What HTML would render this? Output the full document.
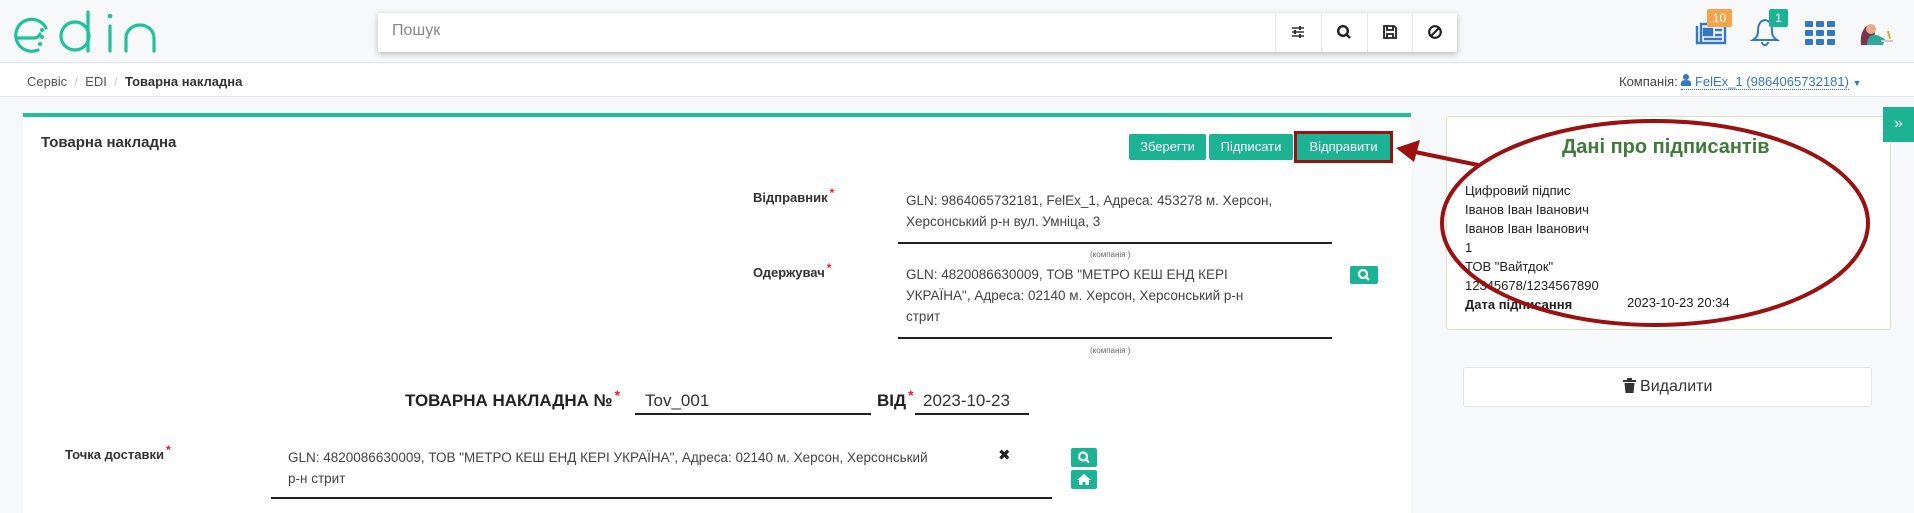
<!DOCTYPE html>
<html><head><meta charset="utf-8"><style>
*{margin:0;padding:0;box-sizing:border-box}
body{width:1914px;height:503px;overflow:hidden;background:#f7f8fa;font-family:"Liberation Sans","DejaVu Sans",sans-serif;color:#333;position:relative;font-size:14px}
.a{position:absolute;white-space:nowrap}
.btn{position:absolute;background:#1bb394;color:#fff;font-size:13px;text-align:center;border-radius:2px}
.st{color:#e0202a;font-size:12px;vertical-align:top;position:relative;top:-4px;margin-left:2px}
.ul{position:absolute;height:1.5px;background:#222}
.sm{position:absolute;font-size:8px;color:#666}
.ib{position:absolute;background:#1bb394;border-radius:2px}
</style></head><body>
<!-- header -->
<div class="a" style="left:0;top:0;width:1914px;height:63px;background:#f7f8fa;border-bottom:1px solid #e3e6ea"></div>
<svg class="a" style="left:0;top:0" width="170" height="60" viewBox="0 0 170 60">
<g fill="none" stroke="#1fc29a" stroke-width="3.2" stroke-linecap="round">
<path d="M38 50 A16 16 0 1 1 46 28"/><path d="M18 38 H34 Q38 38 40 34"/>
<path d="M88 12 V51"/><circle cx="75" cy="36" r="14"/>
<path d="M110 26 V51"/>
<path d="M126 51 V38 A14 13 0 0 1 154 38 V51"/></g>
<g fill="#1fc29a"><circle cx="42" cy="30" r="2"/><circle cx="42" cy="37" r="2"/><circle cx="40" cy="44" r="2"/><circle cx="110" cy="16" r="2.3"/></g>
</svg>
<div class="a" style="left:378px;top:13px;width:1079px;height:39px;background:#fff;box-shadow:0 2px 6px rgba(0,0,0,.25)"></div>
<div class="a" style="left:392px;top:22px;font-size:16px;color:#888">Пошук</div>
<div class="a" style="left:1275px;top:13px;width:1px;height:39px;background:#e5e5e5"></div>
<div class="a" style="left:1321px;top:13px;width:1px;height:39px;background:#e5e5e5"></div>
<div class="a" style="left:1367px;top:13px;width:1px;height:39px;background:#e5e5e5"></div>
<div class="a" style="left:1412px;top:13px;width:1px;height:39px;background:#e5e5e5"></div>
<svg class="a" style="left:1290px;top:24px" width="16" height="16" viewBox="0 0 16 16" stroke="#333" stroke-width="1.5"><path d="M2 4H14M2 8H14M2 12H14"/><path d="M10 2V6M5 6V10M10 10V14" stroke-width="2.2"/></svg>
<svg class="a" style="left:1336px;top:24px" width="16" height="16" viewBox="0 0 16 16" fill="none" stroke="#222" stroke-width="2.4"><circle cx="7" cy="7" r="4.8"/><path d="M10.5 10.5L14 14"/></svg>
<svg class="a" style="left:1382px;top:24px" width="16" height="16" viewBox="0 0 16 16" fill="none" stroke="#222" stroke-width="1.8"><path d="M2 2H12L14 4V14H2Z"/><path d="M5 2V6H11V2M5 14V10H11V14"/></svg>
<svg class="a" style="left:1427px;top:24px" width="16" height="16" viewBox="0 0 16 16" fill="none" stroke="#222" stroke-width="2.2"><circle cx="8" cy="8" r="5.8"/><path d="M4 12L12 4"/></svg>
<!-- top right icons -->
<svg class="a" style="left:1693px;top:20px" width="34" height="25" viewBox="0 0 34 25" fill="none" stroke="#3478c4" stroke-width="2.4"><path d="M4 6V23H32V4H8V23"/><rect x="11" y="9" width="8" height="6" fill="#3478c4"/><path d="M22 10H29M22 15H29M11 19H29"/></svg>
<div class="a" style="left:1707px;top:9px;width:25px;height:18px;background:#f4a54a;color:#fff;font-size:12px;text-align:center;line-height:18px;border-radius:2px">10</div>
<svg class="a" style="left:1750px;top:17px" width="30" height="30" viewBox="0 0 30 30" fill="none" stroke="#3478c4" stroke-width="2"><path d="M15 3C9 4 8 9 8 14C8 19 6 21 3 23H27C24 21 22 19 22 14C22 9 21 4 15 3Z"/><path d="M12 25A3 3 0 0 0 18 25"/></svg>
<div class="a" style="left:1769px;top:9px;width:19px;height:18px;background:#1bb394;color:#fff;font-size:12px;text-align:center;line-height:18px;border-radius:2px">1</div>
<svg class="a" style="left:1805px;top:21px" width="30" height="24" viewBox="0 0 30 24" fill="#3478c4"><rect x="0" y="0" width="8" height="6" rx="1"/><rect x="11" y="0" width="8" height="6" rx="1"/><rect x="22" y="0" width="8" height="6" rx="1"/><rect x="0" y="9" width="8" height="6" rx="1"/><rect x="11" y="9" width="8" height="6" rx="1"/><rect x="22" y="9" width="8" height="6" rx="1"/><rect x="0" y="18" width="8" height="6" rx="1"/><rect x="11" y="18" width="8" height="6" rx="1"/><rect x="22" y="18" width="8" height="6" rx="1"/></svg>
<svg class="a" style="left:1857px;top:17px" width="38" height="30" viewBox="0 0 38 30"><path d="M4 28C3 18 6 10 12 8C17 6 20 10 18 15L16 28Z" fill="#7a3350"/><circle cx="14" cy="12" r="5" fill="#e9a98f"/><path d="M10 28C10 20 14 17 20 18L28 22L26 28Z" fill="#2fa89a"/><path d="M24 24H36" stroke="#ccc" stroke-width="2"/><path d="M31 14L33 22" stroke="#d9a441" stroke-width="2"/></svg>
<!-- breadcrumb -->
<div class="a" style="left:0;top:64px;width:1914px;height:33px;background:#fff;border-bottom:1px solid #e3e6ea"></div>
<div class="a" style="left:27px;top:74px;font-size:13px;color:#555">Сервіс <span style="color:#ccc">&nbsp;/&nbsp;</span> EDI <span style="color:#ccc">&nbsp;/&nbsp;</span> <b style="color:#333">Товарна накладна</b></div>
<div class="a" style="left:1619px;top:74px;font-size:13px;color:#444">Компанія: <span style="color:#3478c4;border-bottom:1px dotted #3478c4"><svg width="10" height="12" viewBox="0 0 10 12" fill="#3478c4"><circle cx="5" cy="3" r="3"/><path d="M0 12V9Q0 6 5 6Q10 6 10 9V12Z"/></svg> FelEx_1 (9864065732181)</span> <span style="color:#3478c4;font-size:9px">▼</span></div>
<!-- main panel -->
<div class="a" style="left:23px;top:113px;width:1388px;height:400px;background:#fff;border-top:4px solid #1fbf9b"></div>
<div class="a" style="left:41px;top:134px;font-size:15px;font-weight:bold;color:#333">Товарна накладна</div>
<div class="btn" style="left:1129px;top:134px;width:77px;height:26px;line-height:26px">Зберегти</div>
<div class="btn" style="left:1209px;top:134px;width:84px;height:26px;line-height:26px">Підписати</div>
<div class="btn" style="left:1294px;top:131px;width:99px;height:32px;line-height:26px;border:3px solid #9b1010;border-radius:0">Відправити</div>
<div class="a" style="left:753px;top:190px;font-size:13px;font-weight:bold">Відправник<span class="st">*</span></div>
<div class="a" style="left:906px;top:190px;font-size:13.5px;line-height:21px;color:#444">GLN: 9864065732181, FelEx_1, Адреса: 453278 м. Херсон,<br>Херсонський р-н вул. Умніца, 3</div>
<div class="ul" style="left:898px;top:242px;width:434px"></div>
<div class="sm" style="left:1090px;top:250px">(компанія )</div>
<div class="a" style="left:753px;top:265px;font-size:13px;font-weight:bold">Одержувач<span class="st">*</span></div>
<div class="a" style="left:906px;top:264px;font-size:13.5px;line-height:21px;color:#444">GLN: 4820086630009, ТОВ "МЕТРО КЕШ ЕНД КЕРІ<br>УКРАЇНА", Адреса: 02140 м. Херсон, Херсонський р-н<br>стрит</div>
<div class="ul" style="left:898px;top:337px;width:434px"></div>
<div class="sm" style="left:1090px;top:346px">(компанія )</div>
<div class="ib" style="left:1350px;top:266px;width:28px;height:18px"><svg width="28" height="18" viewBox="0 0 28 18" fill="none" stroke="#fff" stroke-width="2.2"><circle cx="13" cy="8" r="4"/><path d="M16 11L19 14"/></svg></div>
<div class="a" style="left:405px;top:391px;font-size:17px;font-weight:bold;color:#222">ТОВАРНА НАКЛАДНА №<span class="st" style="font-size:14px">*</span></div>
<div class="a" style="left:645px;top:391px;font-size:17px;color:#333">Tov_001</div>
<div class="ul" style="left:635px;top:413px;width:236px"></div>
<div class="a" style="left:877px;top:391px;font-size:17px;font-weight:bold;color:#222">ВІД<span class="st" style="font-size:14px">*</span></div>
<div class="a" style="left:923px;top:391px;font-size:17px;color:#333">2023-10-23</div>
<div class="ul" style="left:915px;top:413px;width:114px"></div>
<div class="a" style="left:65px;top:447px;font-size:13px;font-weight:bold">Точка доставки<span class="st">*</span></div>
<div class="a" style="left:288px;top:447px;font-size:13.5px;line-height:21px;color:#444">GLN: 4820086630009, ТОВ "МЕТРО КЕШ ЕНД КЕРІ УКРАЇНА", Адреса: 02140 м. Херсон, Херсонський<br>р-н стрит</div>
<div class="a" style="left:998px;top:446px;font-size:15px;font-weight:bold;color:#222">✖</div>
<div class="ul" style="left:271px;top:497px;width:781px"></div>
<div class="ib" style="left:1071px;top:448px;width:26px;height:19px"><svg width="26" height="19" viewBox="0 0 26 19" fill="none" stroke="#fff" stroke-width="2.2"><circle cx="12" cy="8.5" r="4"/><path d="M15 11.5L18 14.5"/></svg></div>
<div class="ib" style="left:1071px;top:470px;width:26px;height:19px"><svg width="26" height="19" viewBox="0 0 26 19" fill="#fff"><path d="M13 4L6 10H8V15H11.5V12H14.5V15H18V10H20Z"/></svg></div>
<!-- right panel -->
<div class="a" style="left:1446px;top:116px;width:445px;height:214px;background:#fff;border:1px solid #cfe8c4;border-radius:3px"></div>
<div class="a" style="left:1883px;top:107px;width:31px;height:35px;background:#1bb394;color:#fff;font-size:16px;text-align:center;line-height:33px">»</div>
<div class="a" style="left:1562px;top:136px;font-size:20px;font-weight:bold;color:#3f7a3b">Дані про підписантів</div>
<div class="a" style="left:1465px;top:181px;font-size:13px;line-height:19px;color:#222">Цифровий підпис<br>Іванов Іван Іванович<br>Іванов Іван Іванович<br>1<br>ТОВ "Вайтдок"<br>12345678/1234567890<br><b>Дата підписання</b></div>
<div class="a" style="left:1627px;top:295px;font-size:13px;color:#222">2023-10-23 20:34</div>
<div class="a" style="left:1463px;top:367px;width:409px;height:40px;background:#fff;border:1px solid #e2e4e8;border-radius:3px;text-align:center;line-height:38px;font-size:16px;color:#333"><svg width="13" height="15" viewBox="0 0 13 15" fill="#333" style="vertical-align:-2px"><rect x="0" y="2" width="13" height="2"/><rect x="4" y="0" width="5" height="2"/><path d="M1.5 5H11.5L10.5 15H2.5Z"/></svg> Видалити</div>
<!-- annotation -->
<svg class="a" style="left:0;top:0" width="1914" height="503">
<ellipse cx="1655" cy="223" rx="213" ry="102" fill="none" stroke="#9b1010" stroke-width="4"/>
<path d="M1478 165L1415 152" stroke="#9b1010" stroke-width="4"/>
<path d="M1396 148L1420 140L1414 162Z" fill="#9b1010"/>
</svg>
</body></html>
